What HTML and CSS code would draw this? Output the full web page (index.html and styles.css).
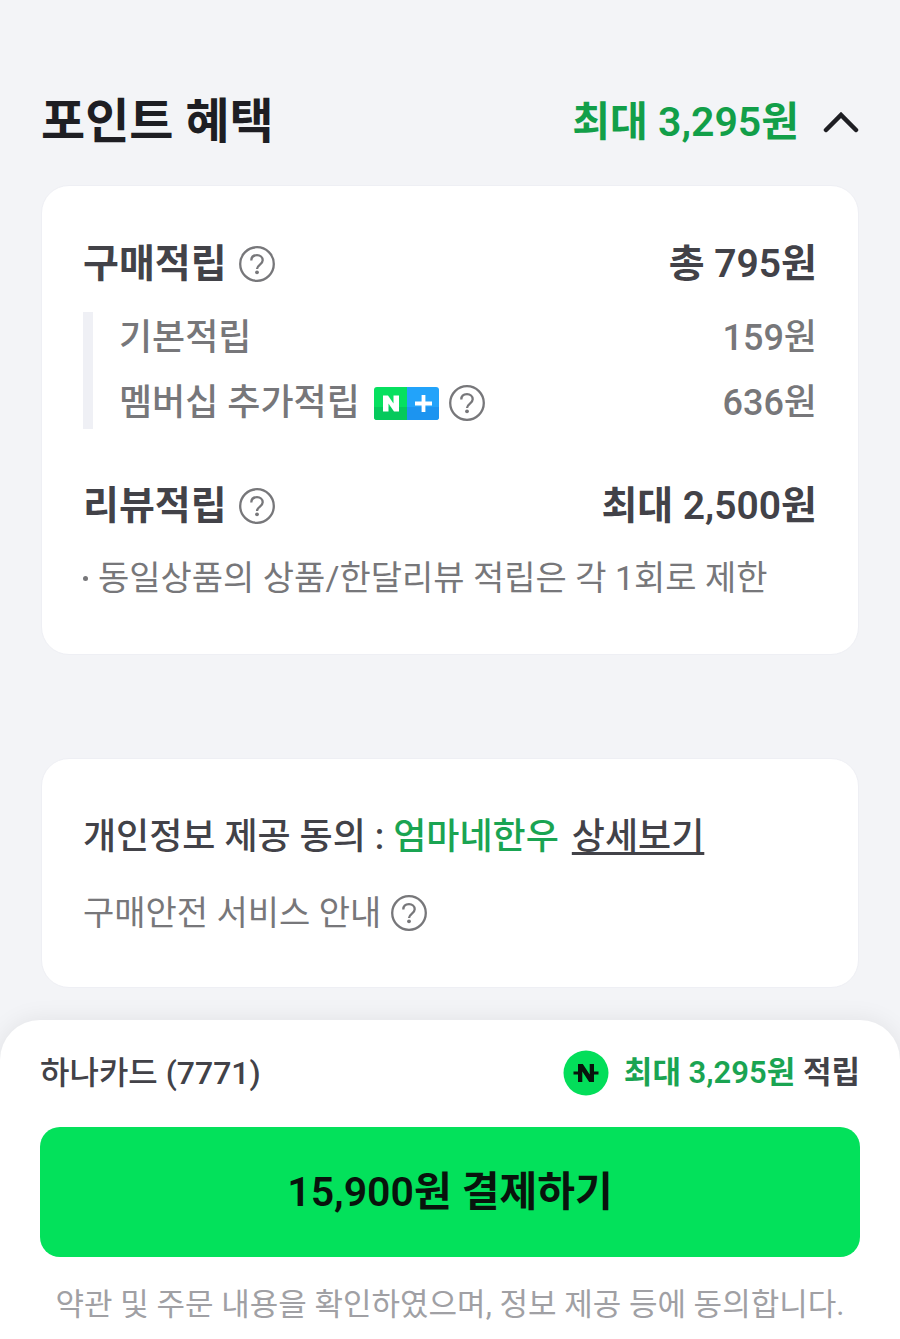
FILE: index.html
```html
<!DOCTYPE html>
<html lang="ko">
<head>
    <meta charset="UTF-8">
    <meta name="viewport" content="width=device-width, initial-scale=1.0">
    <title>주문/결제</title>

    <link rel="stylesheet" href="styles.css">
</head>
<body>
    <svg class="symbols" aria-hidden="true">
        <symbol id="icon-help" viewBox="0 0 36 36">
            <circle cx="18" cy="18" r="16.8" fill="none" stroke="currentColor" stroke-width="2.3"/>
            <path d="M12.300 14.600c0-3.600 2.500-5.400 5.700-5.400s5.700 1.900 5.700 5c0 2.200-1.300 3.400-3 4.700-1.700 1.300-2.700 2.100-2.700 4.100" fill="none" stroke="currentColor" stroke-width="2.3"/>
            <circle cx="18" cy="26.300" r="1.900" fill="currentColor"/>
        </symbol>
    </svg>

    <main>
        <section>
            <header class="section-header">
                <h1>포인트 혜택</h1>
                <button class="toggle" type="button" aria-expanded="true" aria-controls="benefit">
                    최대 3,295원
                    <svg class="chevron" viewBox="0 0 36 22" aria-hidden="true">
                        <path d="M3 19 18 4l15 15" fill="none" stroke="#1e1e23" stroke-width="4.500" stroke-linecap="round"/>
                    </svg>
                </button>
            </header>

            <div class="card benefit" id="benefit">
                <div class="row total">
                    <h2>구매적립</h2>
                    <button class="help" type="button" aria-label="구매적립 도움말"><svg viewBox="0 0 36 36"><use href="#icon-help"/></svg></button>
                    <span class="amount">총 795원</span>
                </div>
                <ul class="details">
                    <li class="row">
                        <span>기본적립</span>
                        <span class="amount">159원</span>
                    </li>
                    <li class="row">
                        <span>멤버십 추가적립</span>
                        <svg class="membership" viewBox="0 0 65 33" role="img" aria-label="네이버플러스 멤버십">
                            <path d="M3 0h30v33H3a3 3 0 0 1-3-3V3a3 3 0 0 1 3-3z" fill="#06e05f"/>
                            <path d="M0 20h33v13H3a3 3 0 0 1-3-3z" fill="#05c95c"/>
                            <path d="M33 0h29a3 3 0 0 1 3 3v27a3 3 0 0 1-3 3H33z" fill="#22a3fa"/>
                            <path d="M33 20h32v10a3 3 0 0 1-3 3H33z" fill="#1c94f0"/>
                            <path d="M9 8.500h5l5.500 8v-8H25v16h-5l-5.500-8v8H9z" fill="#fff"/>
                            <path d="M49.500 8v17M41 16.500h17" stroke="#fff" stroke-width="3.800"/>
                        </svg>
                        <button class="help" type="button" aria-label="멤버십 추가적립 도움말"><svg viewBox="0 0 36 36"><use href="#icon-help"/></svg></button>
                        <span class="amount">636원</span>
                    </li>
                </ul>
                <div class="row total review">
                    <h2>리뷰적립</h2>
                    <button class="help" type="button" aria-label="리뷰적립 도움말"><svg viewBox="0 0 36 36"><use href="#icon-help"/></svg></button>
                    <span class="amount">최대 2,500원</span>
                </div>
                <ul class="notes">
                    <li>동일상품의 상품/한달리뷰 적립은 각 1회로 제한</li>
                </ul>
            </div>
        </section>

        <section class="card agreement">
            <p class="consent">개인정보 제공 동의 : <span class="seller">엄마네한우</span> <a href="#">상세보기</a></p>
            <div class="row safety">
                <span>구매안전 서비스 안내</span>
                <button class="help" type="button" aria-label="구매안전 서비스 도움말"><svg viewBox="0 0 36 36"><use href="#icon-help"/></svg></button>
            </div>
        </section>
    </main>

    <footer class="sheet">
        <div class="row summary">
            <span>하나카드 (7771)</span>
            <span class="reward">
                <svg class="npay" viewBox="0 0 46 46" aria-hidden="true">
                    <circle cx="23" cy="23" r="22.500" fill="#03de5a"/>
                    <path d="M15 14h4.800l6.900 10.500V14H31v18h-4.800l-6.900-10.500V32H15z" fill="#08130c"/>
                    <path d="M10.500 23H16M30 23h5.500" stroke="#08130c" stroke-width="3.200"/>
                </svg>
                <span><em>최대 3,295원</em> 적립</span>
            </span>
        </div>
        <button class="pay" type="button">15,900원 결제하기</button>
        <p class="terms">약관 및 주문 내용을 확인하였으며, 정보 제공 등에 동의합니다.</p>
    </footer>
</body>
</html>
```
FILE: styles.css
```css
* {
    box-sizing: border-box;
}

body {
    display: flex;
    flex-direction: column;
    min-height: 100vh;
    margin: 0;
    background-color: #f3f4f7;
    color: #424248;
    font-family: Roboto, 'Noto Sans CJK KR', sans-serif;
    font-size: 36px;
    line-height: 52px;
}

h1,
h2,
p,
ul {
    margin: 0;
    padding: 0;
}

ul {
    list-style: none;
}

button {
    padding: 0;
    border: none;
    background-color: transparent;
    color: inherit;
    font: inherit;
    cursor: pointer;
}

.symbols {
    display: none;
}

main {
    flex: 1;
    padding: 86px 41px 32px;
}

.section-header {
    display: flex;
    align-items: center;
    justify-content: space-between;
    margin-bottom: 27px;
}

h1 {
    color: #1e1e23;
    font-size: 48px;
    line-height: 72px;
}

.toggle {
    display: flex;
    align-items: center;
    gap: 24px;
    color: #129f49;
    font-size: 41px;
    font-weight: 600;
    line-height: 72px;
}

.chevron {
    width: 36px;
    height: 22px;
}

.card {
    border: 1px solid #eeeff4;
    border-radius: 28px;
    background-color: #fff;
}

.benefit {
    padding: 48px 41px 50px;
}

.row {
    display: flex;
    align-items: center;
}

.amount {
    margin-left: auto;
}

.total {
    font-size: 39px;
    font-weight: 600;
    line-height: 60px;
}

h2 {
    font-size: 39px;
    line-height: 60px;
}

.help {
    display: flex;
    margin-left: 12px;
    color: #77777a;
}

.help svg {
    width: 36px;
    height: 36px;
}

.details {
    display: flex;
    flex-direction: column;
    gap: 13px;
    margin: 18px 0 47px;
    padding-left: 26px;
    border-left: 10px solid #eff0f5;
    color: #77777a;
    font-weight: 500;
}

.membership {
    width: 65px;
    height: 33px;
    margin-left: 14px;
}

.details .help,
.safety .help {
    margin-left: 10px;
}

.notes {
    margin-top: 16px;
    color: #77777a;
    font-size: 34px;
}

.notes li {
    display: flex;
    align-items: center;
    gap: 10px;
}

.notes li::before {
    content: '';
    width: 5px;
    height: 5px;
    border-radius: 50%;
    background-color: #77777a;
}

.agreement {
    margin-top: 103px;
    padding: 52px 41px 48px;
}

.consent {
    font-weight: 500;
}

.seller {
    color: #1aa452;
}

.consent a {
    margin-left: 4px;
    color: inherit;
    text-decoration-thickness: 3px;
    text-underline-offset: 3px;
    text-decoration-skip-ink: none;
}

.safety {
    margin-top: 24px;
    color: #77777a;
    font-size: 34px;
}

.sheet {
    padding: 27px 40px 8px;
    border-radius: 40px 40px 0 0;
    background-color: #fff;
    box-shadow: 0 0 24px rgba(0, 0, 0, .08);
    font-size: 32px;
}

.summary {
    justify-content: space-between;
    font-weight: 500;
}

.reward {
    display: flex;
    align-items: center;
    gap: 15px;
    font-size: 31px;
    font-weight: 600;
}

.reward em {
    color: #1aa452;
    font-style: normal;
}

.npay {
    width: 46px;
    height: 46px;
}

.pay {
    display: block;
    width: 100%;
    margin: 28px 0 22px;
    padding: 35px 0;
    border-radius: 20px;
    background-color: #03e15b;
    color: #08130c;
    font-size: 41px;
    font-weight: 600;
    line-height: 60px;
}

.terms {
    color: #a0a0a4;
    font-size: 31px;
    text-align: center;
}
```
